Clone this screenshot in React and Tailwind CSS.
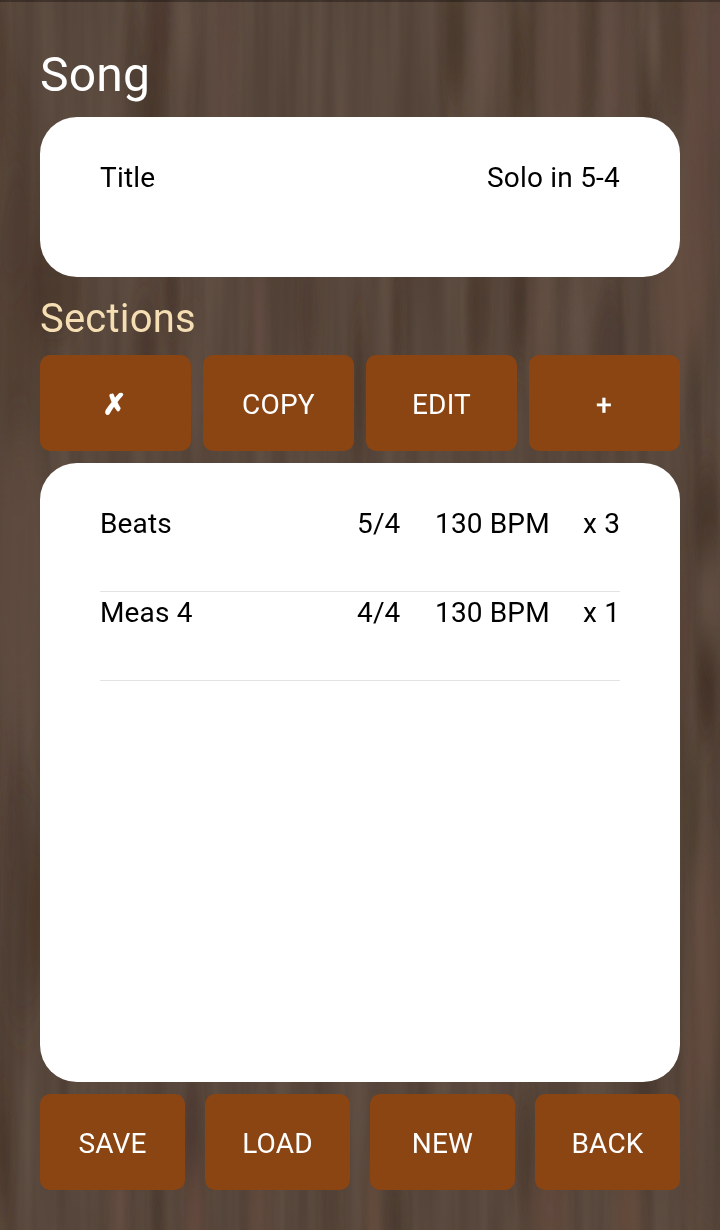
import React from "react";

const sections = [
  { name: "Beats", meter: "5/4", tempo: "130 BPM", repeat: "x 3" },
  { name: "Meas 4", meter: "4/4", tempo: "130 BPM", repeat: "x 1" },
];

// Broad streaks of the wood: x, y, rx, ry, color, opacity
const streaks = [
  [2, 70, 6, 90, "#453126", 0.6],
  [135, 80, 9, 70, "#453126", 0.35],
  [152, 115, 10, 60, "#402e22", 0.65],
  [160, 20, 12, 50, "#402e22", 0.5],
  [185, 20, 9, 60, "#6b594d", 0.6],
  [225, 60, 12, 110, "#644a3f", 0.5],
  [455, 40, 10, 60, "#453425", 0.7],
  [485, 40, 14, 80, "#6b5549", 0.5],
  [518, 65, 7, 60, "#453425", 0.65],
  [530, 60, 4, 60, "#453425", 0.5],
  [560, 70, 22, 100, "#644c40", 0.6],
  [590, 40, 8, 90, "#49382b", 0.5],
  [615, 60, 15, 90, "#644c40", 0.5],
  [646, 100, 9, 70, "#453226", 0.6],
  [653, 45, 5, 40, "#766256", 0.6],
  [675, 60, 12, 80, "#4b3a2d", 0.5],
  [693, 70, 6, 120, "#644a3f", 0.7],
  [715, 60, 8, 100, "#644a3f", 0.6],
  [700, 210, 14, 100, "#62483c", 0.5],
  [10, 200, 22, 90, "#4f3b30", 0.4],
  [18, 330, 22, 160, "#4a362b", 0.5],
  [55, 290, 28, 50, "#443026", 0.6],
  [145, 345, 12, 35, "#402d23", 0.6],
  [172, 290, 8, 30, "#402d23", 0.6],
  [195, 400, 6, 70, "#675447", 0.6],
  [258, 325, 5, 55, "#694c43", 0.6],
  [310, 310, 10, 60, "#433226", 0.4],
  [360, 390, 6, 70, "#443327", 0.6],
  [397, 320, 5, 60, "#453226", 0.6],
  [477, 300, 12, 70, "#433124", 0.6],
  [520, 300, 8, 60, "#403025", 0.7],
  [540, 330, 11, 60, "#664d42", 0.5],
  [575, 320, 10, 60, "#67554a", 0.5],
  [610, 355, 16, 70, "#443327", 0.5],
  [680, 290, 26, 90, "#644c40", 0.7],
  [693, 390, 6, 50, "#45372b", 0.6],
  [707, 520, 14, 55, "#402d23", 0.7],
  [707, 680, 10, 60, "#402d23", 0.8],
  [710, 600, 9, 50, "#6b5749", 0.5],
  [685, 635, 4, 70, "#634437", 0.5],
  [694, 810, 7, 70, "#453529", 0.6],
  [706, 970, 16, 130, "#66493d", 0.5],
  [20, 570, 26, 140, "#5e4b3e", 0.8],
  [22, 900, 26, 130, "#453024", 0.35],
  [36, 920, 10, 70, "#422d22", 0.35],
  [10, 800, 6, 90, "#443227", 0.3],
  [4, 1155, 6, 60, "#402d22", 0.6],
  [192, 1130, 9, 60, "#453228", 0.65],
  [158, 1215, 6, 45, "#403024", 0.6],
  [119, 1215, 9, 35, "#68493c", 0.5],
  [195, 1215, 10, 45, "#68493c", 0.6],
  [260, 1215, 12, 35, "#68493c", 0.5],
  [331, 1210, 9, 40, "#453226", 0.45],
  [395, 1220, 10, 40, "#403025", 0.6],
  [372, 1220, 6, 50, "#704e3d", 0.6],
  [525, 1150, 8, 65, "#443227", 0.6],
  [550, 1210, 20, 45, "#69493d", 0.5],
  [628, 1215, 14, 40, "#704f3e", 0.5],
  [645, 1090, 16, 25, "#403025", 0.6],
  [690, 1110, 6, 100, "#6a493e", 0.5],
  [710, 1150, 10, 60, "#514539", 0.6],
];

function WoodGrain() {
  return (
    <svg
      aria-hidden="true"
      className="absolute inset-0 h-full w-full"
      viewBox="0 0 720 1230"
      preserveAspectRatio="none"
    >
      <defs>
        <filter id="grain" x="0" y="0" width="100%" height="100%" colorInterpolationFilters="sRGB">
          <feTurbulence type="fractalNoise" baseFrequency="0.055 0.0025" numOctaves="3" seed="11" />
          <feColorMatrix values="0.1 0 0 0 0.295  0.095 0 0 0 0.231  0.09 0 0 0 0.189  0 0 0 0 1" />
        </filter>
        <filter id="soften" x="-10%" y="-10%" width="120%" height="120%">
          <feGaussianBlur stdDeviation="4 24" />
        </filter>
      </defs>
      <rect width="720" height="1230" filter="url(#grain)" />
      <g filter="url(#soften)">
        {streaks.map(([x, y, rx, ry, color, opacity], i) => (
          <ellipse key={i} cx={x} cy={y} rx={rx} ry={ry} fill={color} opacity={opacity} />
        ))}
      </g>
    </svg>
  );
}

function WoodButton({ children }) {
  return (
    <button className="flex h-24 min-w-0 flex-1 items-center justify-center rounded-[10px] bg-[#8b4513] pt-1 text-[28px] leading-8 tracking-[0.2px] text-white">
      {children}
    </button>
  );
}

export default function App() {
  return (
    <div className="relative isolate h-[1230px] w-[720px] overflow-hidden bg-[#58473b] font-['Roboto','Liberation_Sans',sans-serif] text-black">
      <WoodGrain />
      <main className="relative flex h-full flex-col border-t-2 border-black/30 px-10 pb-10">
        <h1 className="mt-[45px] h-[70px] shrink-0 text-[48px] leading-[56px] tracking-[0.2px] text-white">Song</h1>

        <section className="flex h-40 shrink-0 justify-between rounded-[37px] bg-white px-[60px] pt-[45px] text-[28px] leading-8 tracking-[0.2px]">
          <span>Title</span>
          <span>Solo in 5-4</span>
        </section>

        <h2 className="mt-[18px] h-[60px] shrink-0 text-[40px] leading-[48px] tracking-[0.2px] text-[#f5deb3]">Sections</h2>

        <div className="flex shrink-0 gap-3">
          <WoodButton>
            <span className="pr-0.5 font-['DejaVu_Sans',sans-serif] [-webkit-text-stroke:1.6px_white]">✗</span>
          </WoodButton>
          <WoodButton>COPY</WoodButton>
          <WoodButton>EDIT</WoodButton>
          <WoodButton>
            <span className="pr-px [-webkit-text-stroke:0.4px_white]">+</span>
          </WoodButton>
        </div>

        <section className="mt-3 h-[619px] shrink-0 rounded-[37px] bg-white px-[60px] pt-10 text-[28px] leading-8 tracking-[0.15px]">
          {sections.map((s) => (
            <div
              key={s.name}
              className="grid h-[89px] grid-cols-[257px_78px_148px_37px] whitespace-nowrap border-b border-[#e3e3e3] pt-[5px]"
            >
              <span>{s.name}</span>
              <span>{s.meter}</span>
              <span>{s.tempo}</span>
              <span>{s.repeat}</span>
            </div>
          ))}
        </section>

        <div className="mt-3 flex shrink-0 gap-5">
          <WoodButton>SAVE</WoodButton>
          <WoodButton>LOAD</WoodButton>
          <WoodButton>NEW</WoodButton>
          <WoodButton>BACK</WoodButton>
        </div>
      </main>
    </div>
  );
}
